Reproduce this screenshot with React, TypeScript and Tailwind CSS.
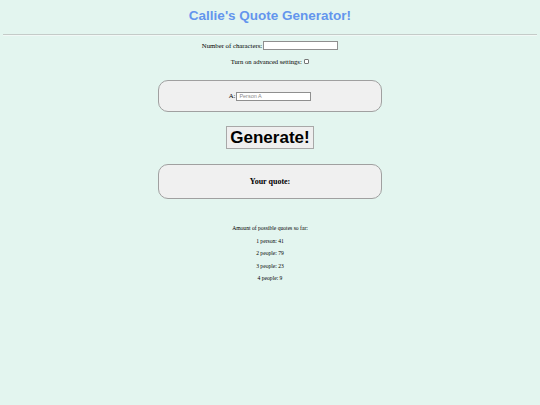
export default function App() {
  return (
    <div className="min-h-[405px] w-full bg-[#e3f5ef] px-[3px] text-black [font-family:'Liberation_Serif',serif]">
      <h1 className="pt-[8px] pb-[10px] text-center text-[13.5px] font-bold leading-[16px] text-[#6495ed] [font-family:'Liberation_Sans',Arial,sans-serif]">
        Callie's Quote Generator!
      </h1>
      <hr className="border-t-[1px] border-b-[1px] border-t-[#c4cbc8] border-b-[#f2f8f6]" />
      <div className="mt-[5px] flex items-center justify-center gap-[1px] text-[6.75px] leading-[9px]">
        <span>Number of characters:</span>
        <input type="text" className="h-[9px] w-[75px] border border-[#8f8f8f] bg-white" />
      </div>
      <div className="mt-[7px] flex items-center justify-center gap-[2px] text-[6.6px] leading-[9px]">
        <span>Turn on advanced settings:</span>
        <input type="checkbox" className="h-[5.5px] w-[5.5px] appearance-none rounded-[1px] border border-[#767676] bg-white" />
      </div>
      <div className="mx-auto mt-[14px] flex h-[32px] w-[224px] items-center justify-center gap-[1px] rounded-[10px] border border-[#a0a0a0] bg-[#f0f0f0] text-[6.75px]">
        <span>A:</span>
        <input
          type="text"
          placeholder="Person A"
          className="h-[9px] w-[75px] border border-[#8f8f8f] bg-white px-[2px] text-[5.5px] placeholder:text-[#8a8a8a] [font-family:'Liberation_Sans',Arial,sans-serif]"
        />
      </div>
      <div className="mt-[14px] flex justify-center">
        <button className="h-[23px] border border-[#a8a8a8] bg-[#efefef] px-[3px] text-[17px] font-bold leading-[20px] [font-family:'Liberation_Sans',Arial,sans-serif]">
          Generate!
        </button>
      </div>
      <div className="mx-auto mt-[15px] flex h-[35px] w-[224px] items-center justify-center rounded-[10px] border border-[#a0a0a0] bg-[#f0f0f0]">
        <span className="text-[8px] font-bold">Your quote:</span>
      </div>
      <div className="mt-[26px] flex flex-col items-center gap-[5px] text-[5.6px] leading-[7.5px]">
        <p>Amount of possible quotes so far:</p>
        <p>1 person: 41</p>
        <p>2 people: 79</p>
        <p>3 people: 23</p>
        <p>4 people: 9</p>
      </div>
    </div>
  );
}
